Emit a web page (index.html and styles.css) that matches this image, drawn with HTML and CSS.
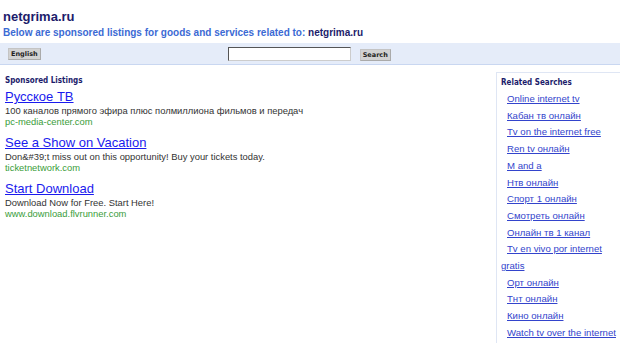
FILE: index.html
```html
<!DOCTYPE html>
<html lang="en">
<head>
  <meta charset="UTF-8" />
  <title>netgrima.ru</title>
  <link rel="stylesheet" href="styles.css">
</head>
<body>

  <div class="header">
    <h1>netgrima.ru</h1>
    <p class="intro">Below are sponsored listings for goods and services related to: <span class="domain">netgrima.ru</span></p>
  </div>

  <div class="bar">
    <button class="btn lang">English</button>
    <form class="search">
      <input type="text" class="query" />
      <button type="button" class="btn">Search</button>
    </form>
  </div>

  <div class="main">
    <div class="listings">
      <h2>Sponsored Listings</h2>

      <div class="ad">
        <a href="#" class="ad-title">Русское ТВ</a>
        <div class="ad-desc">100 каналов прямого эфира плюс полмиллиона фильмов и передач</div>
        <div class="ad-url">pc-media-center.com</div>
      </div>

      <div class="ad">
        <a href="#" class="ad-title">See a Show on Vacation</a>
        <div class="ad-desc">Don&amp;#39;t miss out on this opportunity! Buy your tickets today.</div>
        <div class="ad-url">ticketnetwork.com</div>
      </div>

      <div class="ad">
        <a href="#" class="ad-title">Start Download</a>
        <div class="ad-desc">Download Now for Free. Start Here!</div>
        <div class="ad-url">www.download.flvrunner.com</div>
      </div>
    </div>

    <div class="related">
      <h2>Related Searches</h2>
      <ul>
        <li><a href="#">Online internet tv</a></li>
        <li><a href="#">Кабан тв онлайн</a></li>
        <li><a href="#">Tv on the internet free</a></li>
        <li><a href="#">Ren tv онлайн</a></li>
        <li><a href="#">M and a</a></li>
        <li><a href="#">Нтв онлайн</a></li>
        <li><a href="#">Спорт 1 онлайн</a></li>
        <li><a href="#">Смотреть онлайн</a></li>
        <li><a href="#">Онлайн тв 1 канал</a></li>
        <li><a href="#">Tv en vivo por internet gratis</a></li>
        <li><a href="#">Орт онлайн</a></li>
        <li><a href="#">Тнт онлайн</a></li>
        <li><a href="#">Кино онлайн</a></li>
        <li><a href="#">Watch tv over the internet</a></li>
      </ul>
    </div>
  </div>

</body>
</html>
```

FILE: styles.css
```css
body {
  margin: 0;
  font-family: "Liberation Sans", Arial, sans-serif;
  background: #fff;
  color: #333;
  overflow: hidden;
}

.header {
  padding: 9px 3px 0;
}

h1 {
  margin: 0;
  font-size: 13px;
  line-height: 16px;
  color: #1c1c6b;
}

.intro {
  margin: 0;
  font-size: 10px;
  line-height: 16px;
  font-weight: bold;
  color: #3b6ad4;
}

.intro .domain {
  color: #1c1c6b;
}

.bar {
  margin-top: 2px;
  height: 21px;
  background: #e5ecf9;
  border-bottom: 1px solid #c9d7f1;
  display: flex;
  align-items: center;
  padding: 0 8px;
}

.btn {
  font-family: "DejaVu Sans", Verdana, sans-serif;
  font-size: 6.5px;
  font-weight: bold;
  color: #222;
  background: #d2d2d2;
  border: 1px solid #c4c4c4;
  border-right-color: #aaa;
  border-bottom-color: #aaa;
  padding: 0 2px;
  height: 12px;
  line-height: 10px;
}

.search {
  margin: 0 0 0 187px;
  display: flex;
  align-items: center;
  gap: 9px;
}

.query {
  width: 119px;
  height: 10px;
  padding: 1px;
  border: 1px solid #ccc;
  border-top-color: #555;
  border-left-color: #555;
  background: #fff;
}

.search .btn {
  margin-top: 3px;
}

.main {
  display: flex;
  padding-top: 7px;
}

.listings {
  width: 491px;
  padding-left: 5px;
}

h2 {
  margin: 0;
  font-size: 8px;
  line-height: 11px;
  color: #1c1c6b;
  font-family: "DejaVu Sans Condensed", "DejaVu Sans", sans-serif;
}

.listings h2 {
  margin-top: 3px;
  margin-bottom: 1px;
}

.ad {
  margin-bottom: 6px;
}

.ad-title {
  display: inline-block;
  font-size: 13px;
  line-height: 14px;
  color: #1a1aee;
}

.ad-desc,
.ad-url {
  font-size: 9.4px;
  line-height: 11px;
}

.ad-desc {
  color: #333;
}

.ad-url {
  color: #3a9d3a;
}

.related {
  flex: 1;
  border: 1px solid #dfe6f4;
  border-right: none;
  padding: 4px 0 0 4px;
  height: 280px;
}

.related h2 {
  margin-bottom: 3px;
}

.related ul {
  margin: 0;
  padding: 0;
  list-style: none;
}

.related li {
  font-size: 9.6px;
  line-height: 16.7px;
}

.related a {
  color: #3344cc;
  padding-left: 6px;
}
```
